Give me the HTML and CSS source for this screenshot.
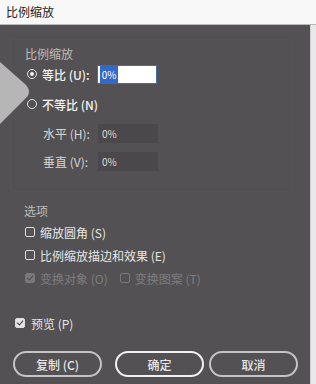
FILE: index.html
```html
<!DOCTYPE html>
<html lang="zh-CN">
<head>
  <meta charset="UTF-8">
  <title>比例缩放</title>
  <link rel="stylesheet" href="styles.css">
</head>
<body>
  <div class="titlebar">比例缩放</div>

  <div class="window">
    <div class="dialog">
      <div class="group">
        <div class="legend">比例缩放</div>

        <div class="row first">
          <span class="radio on"></span>
          <span class="label strong">等比 (U):</span>
          <span class="field active"><span class="sel">0%</span></span>
        </div>

        <div class="row gap10">
          <span class="radio"></span>
          <span class="label strong">不等比 (N)</span>
        </div>

        <div class="row sub gap9">
          <span class="label">水平 (H):</span>
          <span class="field">0%</span>
        </div>

        <div class="row sub gap8">
          <span class="label">垂直 (V):</span>
          <span class="field">0%</span>
        </div>
      </div>

      <div class="legend opts">选项</div>

      <div class="row check">
        <span class="box"></span>
        <span class="label">缩放圆角 (S)</span>
      </div>
      <div class="row check">
        <span class="box"></span>
        <span class="label">比例缩放描边和效果 (E)</span>
      </div>
      <div class="row check off">
        <span class="box checked"></span>
        <span class="label">变换对象 (O)</span>
        <span class="box second"></span>
        <span class="label">变换图案 (T)</span>
      </div>

      <div class="row preview">
        <span class="box checked"></span>
        <span class="label">预览 (P)</span>
      </div>

      <div class="buttons">
        <button class="btn">复制 (C)</button>
        <button class="btn ok">确定</button>
        <button class="btn cancel">取消</button>
      </div>
    </div>
    <div class="edge"></div>
  </div>

  <svg class="pointer" width="40" height="70" viewBox="0 0 40 70">
    <path d="M0 0 L25 22 Q33 30 25 37 L0 62 Z" fill="#b6b6b6"/>
  </svg>
</body>
</html>
```

FILE: styles.css
```css
* {
  box-sizing: border-box;
  margin: 0;
  padding: 0;
}
html, body {
  width: 316px;
  height: 384px;
  overflow: hidden;
}
body {
  font-family: "Noto Sans CJK SC", "Noto Sans", sans-serif;
  font-size: 12px;
  background: #535153;
  color: #e6e6e6;
  position: relative;
}
.titlebar {
  height: 25px;
  background: #f8f8f8;
  border-bottom: 1px solid #b9b9b9;
  color: #222;
  font-size: 12px;
  line-height: 24px;
  padding-left: 6px;
}
.window {
  display: flex;
  height: 359px;
}
.dialog {
  width: 310px;
  background: #535153;
  padding: 14px 0 0 0;
}
.edge {
  width: 6px;
  background: #e9e9e9;
  border-left: 1px solid #cfcfcf;
}
.group {
  margin: 0 18px 0 10px;
  padding: 7px 0 20px 14px;
  border: 1px solid rgba(255, 255, 255, 0.018);
  border-radius: 2px;
}
.legend {
  height: 14px;
  line-height: 14px;
  color: #bcbcbc;
}
.opts {
  margin: 12px 0 4px 24px;
}
.row {
  display: flex;
  align-items: center;
  height: 20px;
}
.first { margin-top: 3px; }
.gap10 { margin-top: 10px; }
.gap9 { margin-top: 9px; }
.gap8 { margin-top: 8px; }
.radio {
  width: 10px;
  height: 10px;
  border-radius: 50%;
  border: 1.5px solid #e2e2e2;
  margin: 0 5px 0 2px;
  position: relative;
}
.radio.on::after {
  content: "";
  position: absolute;
  left: 1.5px;
  top: 1.5px;
  width: 4px;
  height: 4px;
  border-radius: 50%;
  background: #f0f0f0;
}
.label {
  white-space: nowrap;
}
.strong {
  color: #f2f2f2;
  font-weight: 500;
}
.sub {
  padding-left: 18px;
}
.sub .label {
  width: 55px;
  color: #d6d6d6;
}
.field {
  width: 60px;
  height: 19px;
  background: #4a484a;
  color: #dcdcdc;
  font-size: 10px;
  line-height: 19px;
  padding-left: 4px;
  margin-left: 7px;
}
.sub .field {
  margin-left: 0;
}
.field.active {
  background: #fff;
  border: 1px solid #3f6fae;
  padding-left: 2px;
  line-height: 17px;
}
.sel {
  background: #3468c9;
  color: #fff;
  padding: 2px 2px;
}
.check {
  margin: 3px 0 0 25px;
}
.box {
  width: 10px;
  height: 10px;
  border: 1.5px solid #dcdcdc;
  border-radius: 2px;
  margin-right: 5px;
  position: relative;
}
.box.checked {
  background: #e4e4e4;
}
.box.checked::after {
  content: "";
  position: absolute;
  left: 2px;
  top: 0px;
  width: 3px;
  height: 5px;
  border: solid #3a3a3a;
  border-width: 0 1.5px 1.5px 0;
  transform: rotate(40deg);
}
.box.second {
  margin-left: 12px;
}
.off {
  opacity: 0.28;
}
.preview {
  margin: 25px 0 0 15px;
}
.preview .label {
  margin-left: 1px;
}
.buttons {
  display: flex;
  margin: 18px 0 0 13px;
}
.btn {
  width: 89px;
  height: 26px;
  border-radius: 13px;
  background: transparent;
  border: 2px solid #c4c4c4;
  color: #e6e6e6;
  font-family: inherit;
  font-size: 12px;
  font-weight: 500;
}
.ok {
  margin-left: 13px;
  border-color: #f2f2f2;
}
.cancel {
  margin-left: 5px;
}
.pointer {
  position: absolute;
  left: 0;
  top: 62px;
}
```
